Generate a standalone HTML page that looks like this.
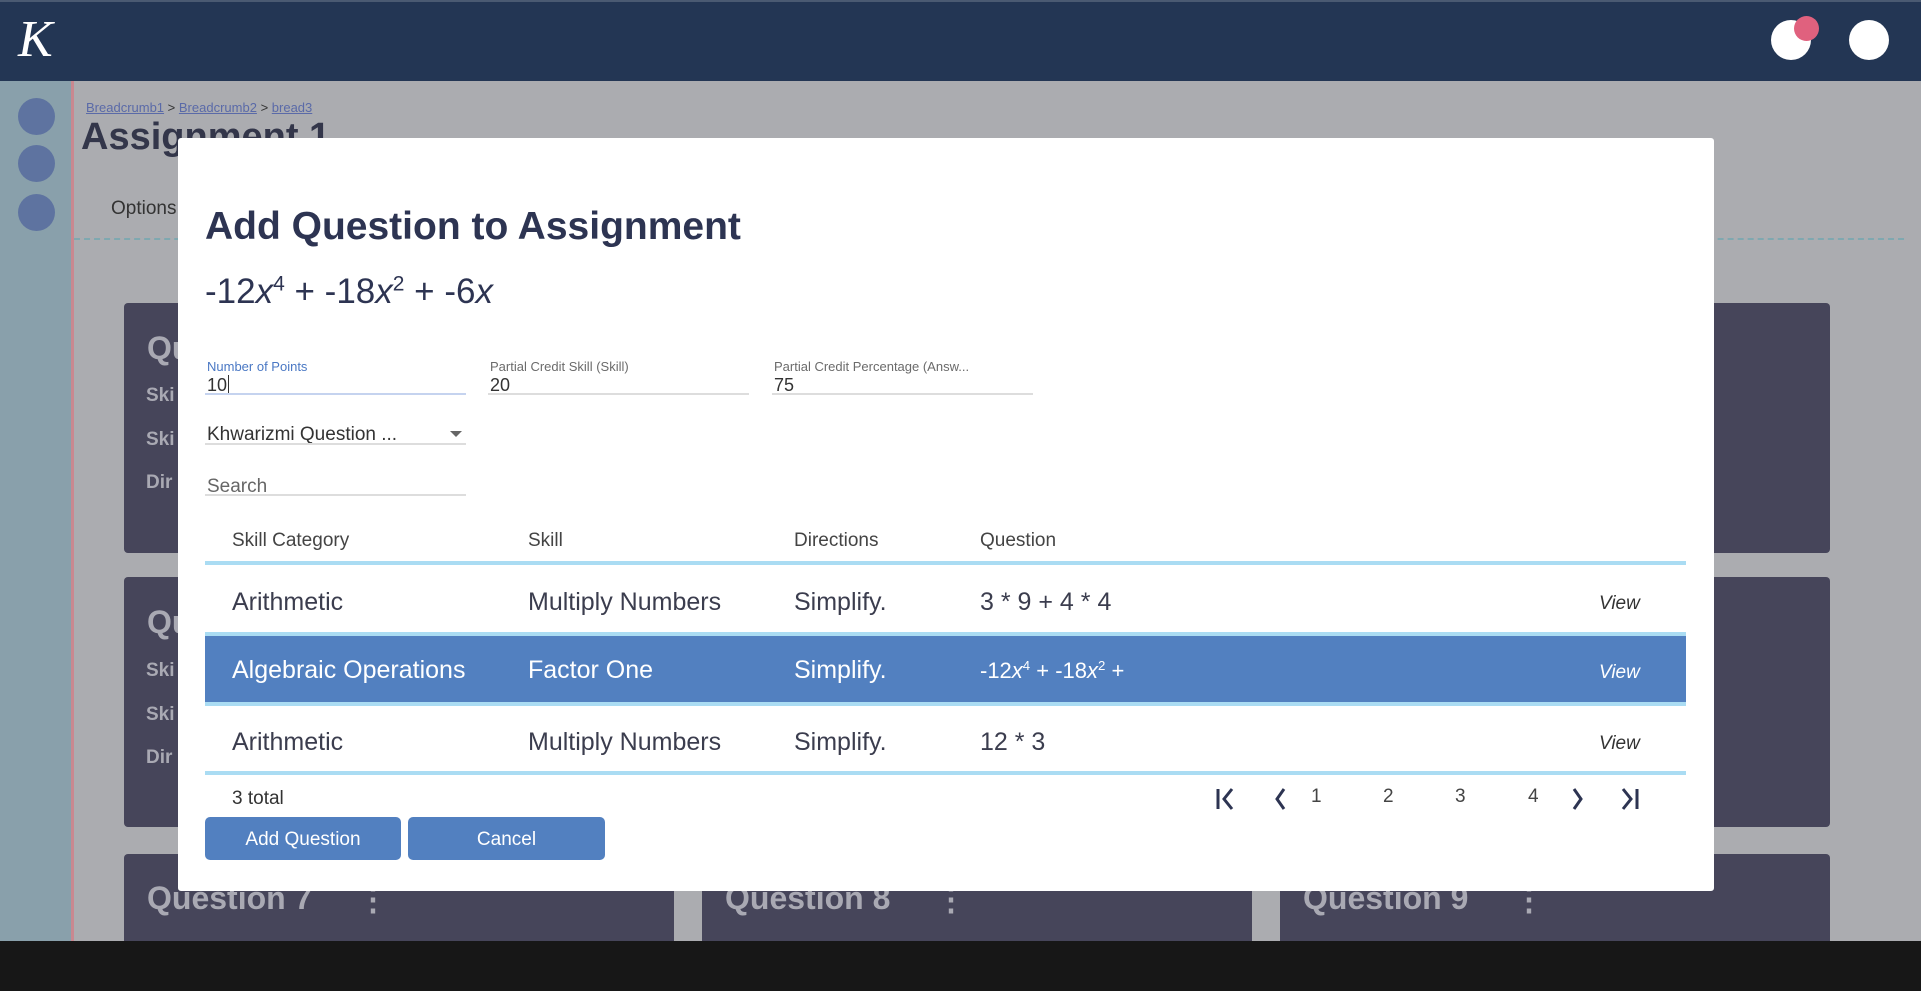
<!DOCTYPE html>
<html><head><meta charset="utf-8"><style>
*{margin:0;padding:0;box-sizing:border-box}
body{width:1921px;height:1000px;overflow:hidden;background:#fff;font-family:"Liberation Sans",sans-serif;position:relative}
.a{position:absolute}
.hdr{left:0;top:0;width:1921px;height:81px;background:#233654;border-top:2px solid #4a5a72}
.side{left:0;top:81px;width:71px;height:860px;background:#89a0ab}
.pink{left:71px;top:81px;width:3px;height:860px;background:#c98890}
.main{left:74px;top:81px;width:1847px;height:860px;background:#abacb0}
.dot{width:37px;height:37px;border-radius:50%;background:#5e73a0}
.card{background:#46455a;border-radius:4px}
.ct{color:#a9a9b3;font-weight:bold}
.modal{left:178px;top:138px;width:1536px;height:753px;background:#fff;border-radius:3px}
.lbl{font-size:13px;color:#6b6b6b}
.val{font-size:18px;color:#333}
.ul{height:2px;background:#ddd}
.th{font-size:19px;color:#444;top:530px}
.td{font-size:25px;color:#3b3d4e}
.hl{height:4px;background:#aadcf3;left:205px;width:1481px}
.view{font-style:italic;font-size:19px;color:#333;left:1599px}
.btn{background:#5280c0;color:#fff;font-size:19px;text-align:center;line-height:45px;border-radius:5px;top:817px;height:43px}
.pg{font-size:19px;color:#444;top:786px}
sup{font-size:60%;vertical-align:0.6em;line-height:0}
</style></head><body>
<div class="a hdr"></div>
<div class="a" style="left:18px;top:10px;font-family:'Liberation Serif',serif;font-style:italic;font-size:52px;color:#fff">K</div>
<div class="a" style="left:1771px;top:20px;width:40px;height:40px;border-radius:50%;background:#fff"></div>
<div class="a" style="left:1794px;top:16px;width:25px;height:25px;border-radius:50%;background:#e0617e"></div>
<div class="a" style="left:1849px;top:20px;width:40px;height:40px;border-radius:50%;background:#fff"></div>
<div class="a side"></div><div class="a pink"></div><div class="a main"></div>
<div class="a dot" style="left:18px;top:98px"></div>
<div class="a dot" style="left:18px;top:145px"></div>
<div class="a dot" style="left:18px;top:194px"></div>
<div class="a" style="left:86px;top:100px;font-size:13px;color:#5a6aa8"><u>Breadcrumb1</u> <span style="color:#333">&gt;</span> <u>Breadcrumb2</u> <span style="color:#333">&gt;</span> <u>bread3</u></div>
<div class="a" style="left:81px;top:116px;font-size:38px;font-weight:bold;color:#33364a">Assignment 1</div>
<div class="a" style="left:111px;top:198px;font-size:19px;color:#333">Options</div>
<div class="a" style="left:74px;top:238px;width:1830px;border-top:2px dashed #7fa8b0"></div>
<div class="a card" style="left:124px;top:303px;width:550px;height:250px"></div>
<div class="a card" style="left:1280px;top:303px;width:550px;height:250px"></div>
<div class="a card" style="left:124px;top:577px;width:550px;height:250px"></div>
<div class="a card" style="left:1280px;top:577px;width:550px;height:250px"></div>
<div class="a card" style="left:124px;top:854px;width:550px;height:100px"></div>
<div class="a card" style="left:702px;top:854px;width:550px;height:100px"></div>
<div class="a card" style="left:1280px;top:854px;width:550px;height:100px"></div>
<div class="a ct" style="left:147px;top:330px;font-size:32px">Qu</div>
<div class="a ct" style="left:146px;top:385px;font-size:19px">Ski</div>
<div class="a ct" style="left:146px;top:429px;font-size:19px">Ski</div>
<div class="a ct" style="left:146px;top:472px;font-size:19px">Dir</div>
<div class="a ct" style="left:147px;top:604px;font-size:32px">Qu</div>
<div class="a ct" style="left:146px;top:660px;font-size:19px">Ski</div>
<div class="a ct" style="left:146px;top:704px;font-size:19px">Ski</div>
<div class="a ct" style="left:146px;top:747px;font-size:19px">Dir</div>
<div class="a ct" style="left:147px;top:880px;font-size:32px">Question 7</div>
<div class="a ct" style="left:725px;top:880px;font-size:32px">Question 8</div>
<div class="a ct" style="left:1303px;top:880px;font-size:32px">Question 9</div>
<div class="a ct" style="left:357px;top:880px;font-size:32px">⋮</div>
<div class="a ct" style="left:935px;top:880px;font-size:32px">⋮</div>
<div class="a ct" style="left:1513px;top:880px;font-size:32px">⋮</div>

<div class="a modal"></div>
<div class="a" style="left:205px;top:205px;font-size:39px;font-weight:bold;color:#2d3452">Add Question to Assignment</div>
<div class="a" style="left:205px;top:272px;font-size:35px;color:#2d3452">-12<i>x</i><sup>4</sup> + -18<i>x</i><sup>2</sup> + -6<i>x</i></div>
<div class="a lbl" style="left:207px;top:359px;color:#4a78c4">Number of Points</div>
<div class="a val" style="left:207px;top:375px">10<span style="border-left:1px solid #333;margin-left:1px"></span></div>
<div class="a ul" style="left:205px;top:393px;width:261px;background:#c5d3ef"></div>
<div class="a lbl" style="left:490px;top:359px">Partial Credit Skill (Skill)</div>
<div class="a val" style="left:490px;top:375px">20</div>
<div class="a ul" style="left:488px;top:393px;width:261px"></div>
<div class="a lbl" style="left:774px;top:359px">Partial Credit Percentage (Answ...</div>
<div class="a val" style="left:774px;top:375px">75</div>
<div class="a ul" style="left:772px;top:393px;width:261px"></div>
<div class="a" style="left:207px;top:424px;font-size:19px;color:#333">Khwarizmi Question ...</div>
<div class="a" style="left:450px;top:431px;width:0;height:0;border-left:6px solid transparent;border-right:6px solid transparent;border-top:6px solid #666"></div>
<div class="a ul" style="left:205px;top:443px;width:261px"></div>
<div class="a" style="left:207px;top:476px;font-size:19px;color:#666">Search</div>
<div class="a ul" style="left:205px;top:494px;width:261px"></div>

<div class="a th" style="left:232px">Skill Category</div>
<div class="a th" style="left:528px">Skill</div>
<div class="a th" style="left:794px">Directions</div>
<div class="a th" style="left:980px">Question</div>
<div class="a hl" style="top:561px"></div>
<div class="a td" style="left:232px;top:588px">Arithmetic</div>
<div class="a td" style="left:528px;top:588px">Multiply Numbers</div>
<div class="a td" style="left:794px;top:588px">Simplify.</div>
<div class="a td" style="left:980px;top:588px">3 * 9 + 4 * 4</div>
<div class="a view" style="top:593px">View</div>
<div class="a hl" style="top:632px"></div>
<div class="a" style="left:205px;top:636px;width:1481px;height:66px;background:#5280c0"></div>
<div class="a td" style="left:232px;top:656px;color:#fff">Algebraic Operations</div>
<div class="a td" style="left:528px;top:656px;color:#fff">Factor One</div>
<div class="a td" style="left:794px;top:656px;color:#fff">Simplify.</div>
<div class="a td" style="left:980px;top:658px;color:#fff;font-size:22px">-12<i>x</i><sup>4</sup> + -18<i>x</i><sup>2</sup> +</div>
<div class="a view" style="top:662px;color:#fff">View</div>
<div class="a hl" style="top:702px"></div>
<div class="a td" style="left:232px;top:728px">Arithmetic</div>
<div class="a td" style="left:528px;top:728px">Multiply Numbers</div>
<div class="a td" style="left:794px;top:728px">Simplify.</div>
<div class="a td" style="left:980px;top:728px">12 * 3</div>
<div class="a view" style="top:733px">View</div>
<div class="a hl" style="top:771px"></div>
<div class="a" style="left:232px;top:788px;font-size:19px;color:#333">3 total</div>
<svg class="a" style="left:1214px;top:786px" width="440" height="26" viewBox="0 0 440 26" fill="none" stroke="#2d3452" stroke-width="3">
<path d="M4 3v20M18 3l-8 10 8 10"/>
<path d="M70 3l-7 10 7 10"/>
<path d="M360 3l7 10-7 10"/>
<path d="M409 3l8 10-8 10M423 3v20"/>
</svg>
<div class="a pg" style="left:1311px">1</div>
<div class="a pg" style="left:1383px">2</div>
<div class="a pg" style="left:1455px">3</div>
<div class="a pg" style="left:1528px">4</div>
<div class="a btn" style="left:205px;width:196px">Add Question</div>
<div class="a btn" style="left:408px;width:197px">Cancel</div>

<div class="a" style="left:0;top:941px;width:1921px;height:50px;background:#171717"></div>
</body></html>
